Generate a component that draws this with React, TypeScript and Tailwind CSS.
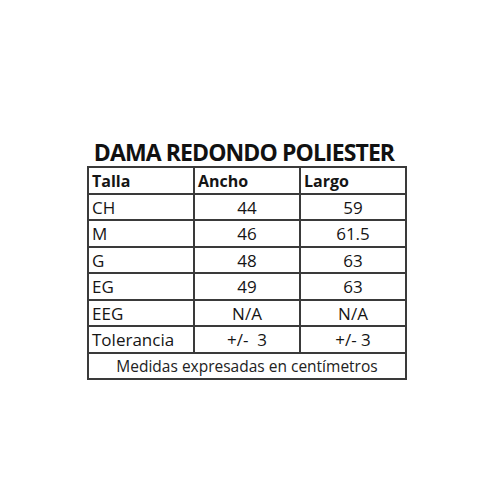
const rows = [
  ["CH", "44", "59"],
  ["M", "46", "61.5"],
  ["G", "48", "63"],
  ["EG", "49", "63"],
  ["EEG", "N/A", "N/A"],
  ["Tolerancia", "+/-  3", "+/- 3"],
];

export default function App() {
  return (
    <div
      className="flex h-[500px] w-[500px] flex-col items-center bg-white pt-[138px] text-[#151515]"
      style={{ fontFamily: '"Open Sans", "Liberation Sans", sans-serif' }}
    >
      <h1 className="ml-[-12px] text-[23px] font-bold leading-[28px] tracking-[-0.9px] text-[#111]">
        DAMA REDONDO POLIESTER
      </h1>

      <div className="ml-[-6px] w-[320px] border-l-2 border-t-2 border-[#3a3a3a]">
        {/* Header */}
        <div className="flex">
          <div className="h-[26.5px] w-[106px] border-b-2 border-r-2 border-[#3a3a3a] pl-[3px] pt-[3px] text-[16px] font-bold leading-[20px]">
            Talla
          </div>
          <div className="h-[26.5px] w-[106px] border-b-2 border-r-2 border-[#3a3a3a] pl-[3px] pt-[3px] text-[16px] font-bold leading-[20px]">
            Ancho
          </div>
          <div className="h-[26.5px] w-[106px] border-b-2 border-r-2 border-[#3a3a3a] pl-[3px] pt-[3px] text-[16px] font-bold leading-[20px]">
            Largo
          </div>
        </div>

        {rows.map(([talla, ancho, largo]) => (
          <div key={talla} className="flex">
            <div className="h-[26.5px] w-[106px] border-b-2 border-r-2 border-[#3a3a3a] pl-[3px] pt-[3px] text-[17px] leading-[20px]">
              {talla}
            </div>
            <div className="h-[26.5px] w-[106px] whitespace-pre border-b-2 border-r-2 border-[#3a3a3a] pt-[3px] text-center text-[17px] leading-[20px]">
              {ancho}
            </div>
            <div className="h-[26.5px] w-[106px] whitespace-pre border-b-2 border-r-2 border-[#3a3a3a] pt-[3px] text-center text-[17px] leading-[20px]">
              {largo}
            </div>
          </div>
        ))}

        {/* Note */}
        <div className="h-[26.5px] w-[318px] border-b-2 border-r-2 border-[#3a3a3a] pt-[2px] text-center text-[15.5px] leading-[20px] text-[#222]">
          Medidas expresadas en centímetros
        </div>
      </div>
    </div>
  );
}
